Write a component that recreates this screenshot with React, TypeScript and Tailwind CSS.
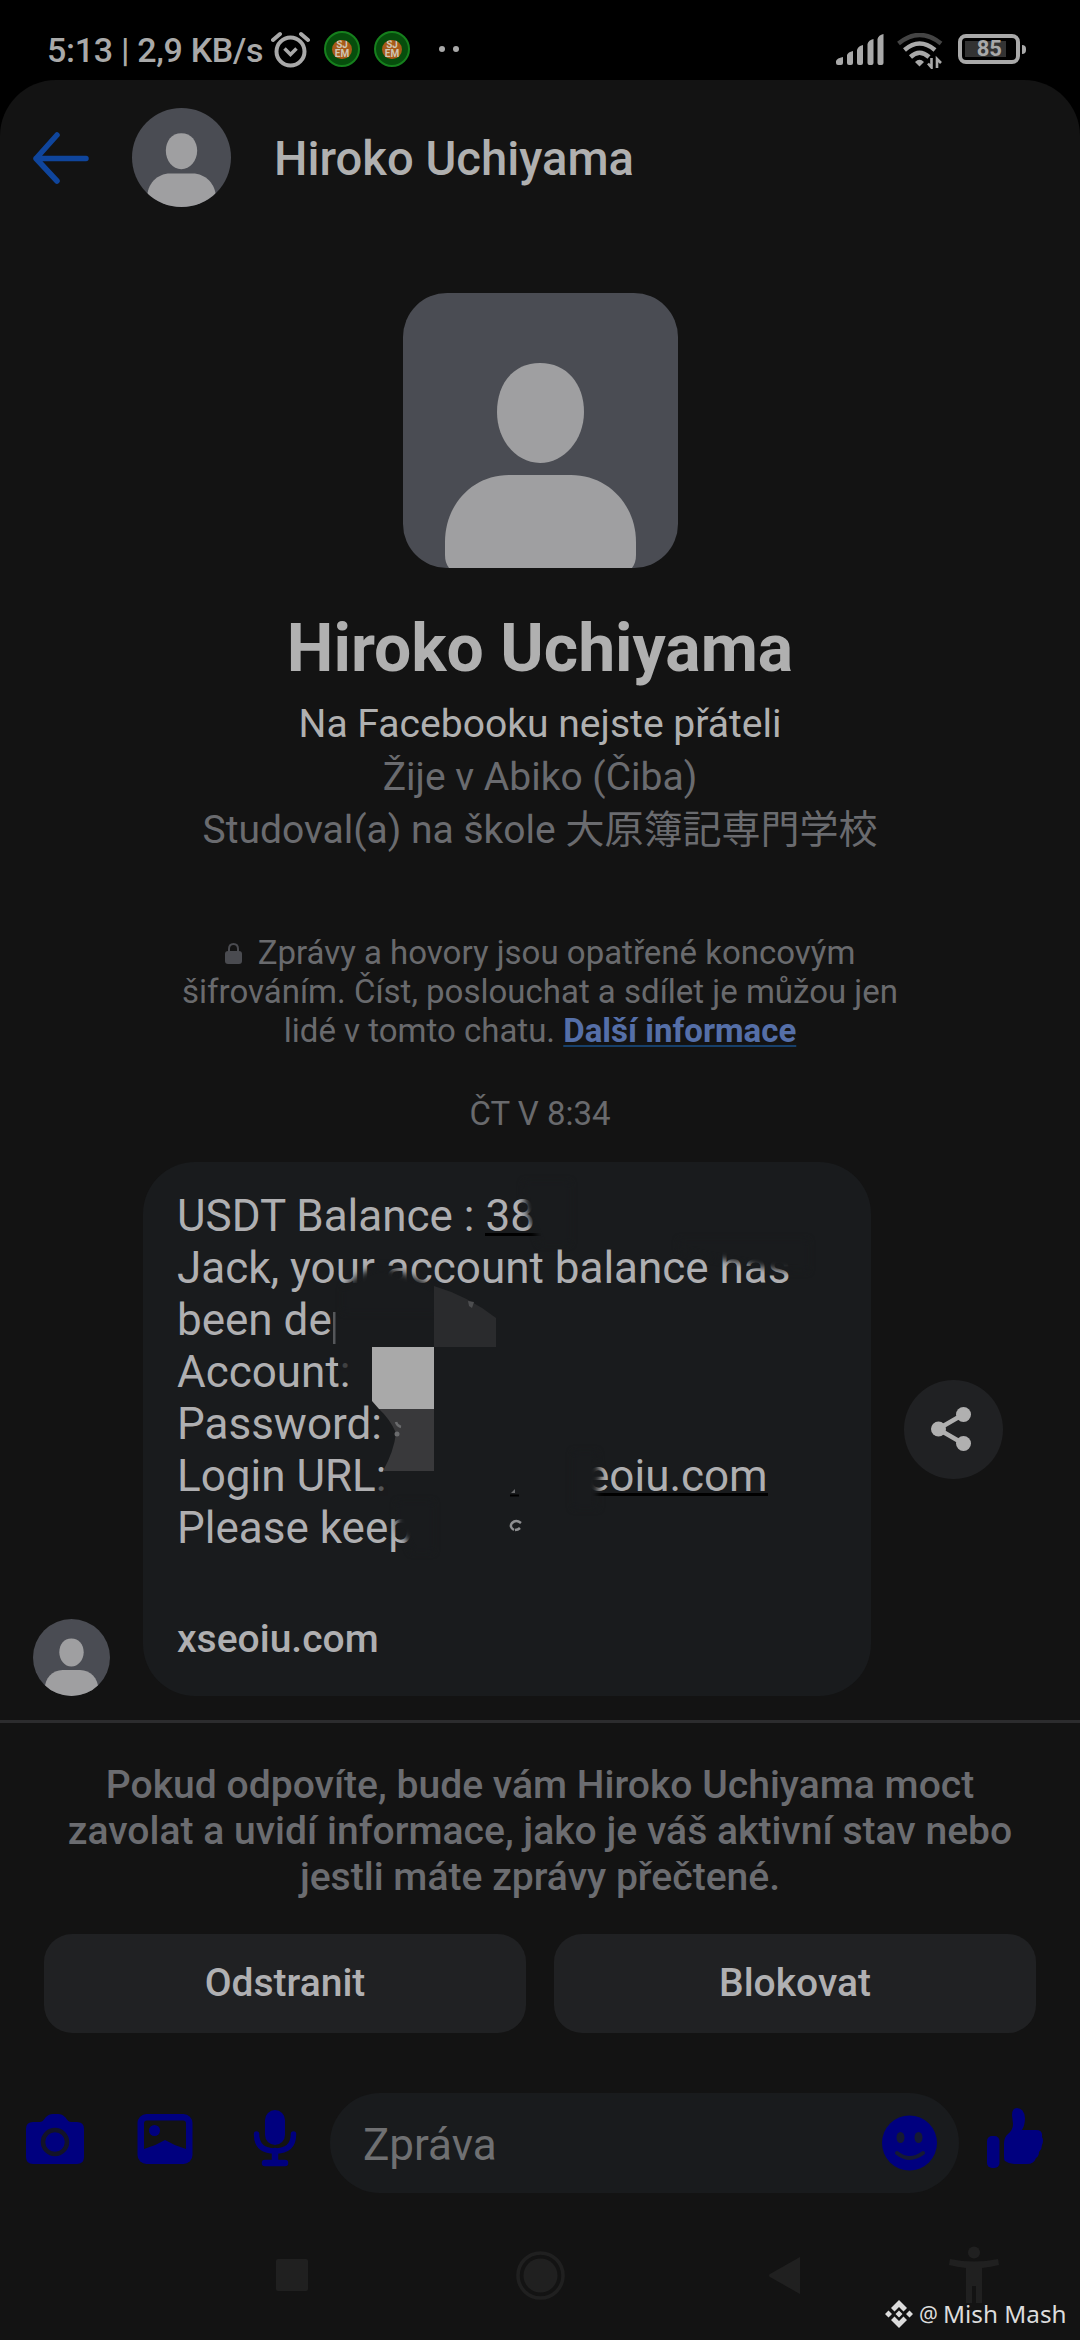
import type { ReactNode } from "react";

const Avatar = ({ className }: { className: string }) => (
  <svg viewBox="0 0 275 275" className={className}>
    <rect width="275" height="275" fill="#4a4c53" />
    <path
      d="M137 70C164 70 181 91 181 119C181 147 161 170 137 170C113 170 94 147 94 119C94 91 110 70 137 70Z"
      fill="#9f9fa1"
    />
    <path
      d="M106 182H168C205 182 233 212 233 249V262Q233 270 229 275H46Q42 270 42 262V249C42 212 69 182 106 182Z"
      fill="#9f9fa1"
    />
  </svg>
);

const AppBadge = () => (
  <div className="w-9 h-9 rounded-full bg-[#064d0c] border-2 border-[#16801d] flex items-center justify-center">
    <div className="w-5 h-[19px] rounded-full bg-[#a85a18] flex flex-col items-center justify-center overflow-hidden text-[10px] leading-[9px] font-bold text-[#cfc6b4]">
      <span>SJ</span>
      <span>EM</span>
    </div>
  </div>
);

const StatusBar = () => (
  <header className="h-20 shrink-0 flex items-start text-[#a9a9a9]">
    <span className="ml-[47px] mt-[30px] w-[217px] text-[34px] leading-[40px] font-medium tracking-[-0.3px] whitespace-nowrap">
      5:13 | 2,9 KB/s
    </span>
    <svg viewBox="0 0 40 37" className="ml-[7px] mt-[31px] w-10 h-[37px]" fill="none" stroke="#a9a9a9">
      <circle cx="19.500" cy="20.500" r="14" strokeWidth="4" />
      <path d="M13.500 17.500l6 6 6-6" strokeWidth="3.500" />
      <path d="M2 9L9 3M30 3l7 6" strokeWidth="4" strokeLinecap="round" />
    </svg>
    <div className="ml-[13px] mt-[31px] flex gap-3.5">
      <AppBadge />
      <AppBadge />
    </div>
    <div className="ml-[29px] mt-[46px] flex gap-2">
      <span className="w-1.5 h-1.5 rounded-full bg-[#a9a9a9]" />
      <span className="w-1.5 h-1.5 rounded-full bg-[#a9a9a9]" />
    </div>
    <svg viewBox="0 0 49 32" className="ml-auto mt-[34px] w-[49px] h-8" fill="#a9a9a9">
      <path d="M0 27q1-3 7-4v6q0 2-2 2H2q-2 0-2-2zM11 21q1-3 6-4v12q0 2-2 2h-2q-2 0-2-2zM21 16q1-4 6-5v18q0 2-2 2h-2q-2 0-2-2zM31.500 10q1-4 6-5v24q0 2-2 2h-2q-2 0-2-2zM41.500 5q1-4 6-5v29q0 2-2 2h-2q-2 0-2-2z" />
    </svg>
    <svg viewBox="0 0 46 36" className="ml-3 mt-[33px] w-[46px] h-9" fill="none" strokeWidth="4.500">
      <path d="M1.500 10.500Q22.500-6.500 44 10.500" stroke="#444" />
      <path d="M7.500 17Q22.500 4 38 17" stroke="#a9a9a9" />
      <path d="M13.500 24Q22.500 15.500 32 24" stroke="#a9a9a9" />
      <path d="M18 29q4.500-4.500 9 0l-4.500 4.500z" fill="#a9a9a9" />
      <path d="M34.500 25v9.500l-3.500-4M40 35v-9l4 4" stroke="#a9a9a9" strokeWidth="2.600" />
    </svg>
    <div className="ml-[15px] mr-[54px] mt-[34px] flex items-center">
      <div className="w-[62px] h-[30px] rounded-[8px] border-4 border-[#a9a9a9] p-[3px]">
        <div className="w-[41px] h-4 bg-[#333] flex items-center justify-end pr-1 text-[22px] leading-none font-bold">
          85
        </div>
      </div>
      <span className="ml-0.5 w-1 h-[9px] rounded-r bg-[#a9a9a9]" />
    </div>
  </header>
);

const Line = ({ children }: { children: ReactNode }) => (
  <p className="flex whitespace-pre h-[52px]">{children}</p>
);

// brush strokes and pixel blocks that hide the private parts of the message
const Redaction = () => (
  <svg viewBox="0 0 728 534" className="absolute inset-0 w-[728px] h-[534px]">
    <defs>
      <filter id="soft" x="-50%" y="-50%" width="200%" height="200%" colorInterpolationFilters="sRGB">
        <feGaussianBlur stdDeviation="3" />
      </filter>
    </defs>
    <g fill="#191b1d" filter="url(#soft)">
      <path d="M381 20h46v62h-30q-4-12-10-22-8-20-6-40z" />
      <path d="M200 126Q222 105 240 104 268 112 295 127V150H200Z" />
      <path d="M536 78H665V109Q632 110 602 101 570 97 536 88Z" />
      <path d="M254 340h36v50h-22q-2-14-14-20z" />
      <path d="M430 290h24q0 18 5 24-6 8-4 32h-25z" />
    </g>
    <g fill="#191b1d">
      <rect x="195" y="198" width="12" height="12" opacity=".75" />
      <rect x="233" y="322" width="12" height="12" opacity=".6" />
      <rect x="245" y="348" width="9" height="9" opacity=".8" />
    </g>
    <rect x="190" y="150" width="2.500" height="32" fill="#55575a" />
    <path d="M291 124Q325 134 353 156V185H291Z" fill="#2a2b2d" />
    <path d="M325 139l6 1-2 6-3-2z" fill="#4d4e50" />
    <path d="M229 185h62v62h-55l-7-8z" fill="#a9a9a9" />
    <path d="M236 247h55v62h-51q11-20 13-38-6-14-17-24z" fill="#39393b" />
    <path d="M253 260q1 4 5 5" stroke="#6a6b6d" strokeWidth="2.500" fill="none" />
    <circle cx="254" cy="272" r="2.500" fill="#6a6b6d" />
    <path d="M371 368q-5-3-2-7 4-4 9 0M372 368q3 0 5-2" stroke="#8e8f91" strokeWidth="2.500" fill="none" />
    <path d="M368 331l4-4v4z" fill="#6a6b6d" />
    <path d="M367 333.500h9" stroke="#000" strokeWidth="2" />
  </svg>
);

const Message = () => (
  <div className="relative w-[728px] h-[534px] rounded-[52px] bg-[#191b1d] pl-[34px] pt-7 text-[#afafb1]">
    <div className="text-[44px] leading-[52px]">
      <Line>
        USDT Balance :{" "}
        <span className="h-[46px] border-b-[3px] border-black pr-1.5">38</span>
      </Line>
      <Line>Jack, your account balance has</Line>
      <Line>been de</Line>
      <Line>Account:</Line>
      <Line>Password:</Line>
      <Line>
        <span className="w-[409px]">Login URL:</span>
        <span className="h-[46px] border-b-[3px] border-black">eoiu.com</span>
      </Line>
      <Line>Please keep</Line>
    </div>
    <p className="mt-[62px] text-[39px] leading-[46px] font-medium">xseoiu.com</p>
    <Redaction />
  </div>
);

const ActionButton = ({ label }: { label: string }) => (
  <button className="flex-1 h-[99px] rounded-[28px] bg-[#202123] text-[39px] font-medium text-[#b0b0b2] pb-px">
    {label}
  </button>
);

const Composer = () => (
  <div className="mt-[60px] h-[100px] flex items-center">
    <svg viewBox="0 0 60 50" className="ml-[25px] mb-2 w-[60px] h-[50px]">
      <path
        d="M8 8H15C18 8 19 5 21 3C23 1 25 0 28 0H33C36 0 38 1 40 3C42 5 43 8 46 8H52Q59 8 59 15V43Q59 50 52 50H8Q1 50 1 43V15Q1 8 8 8Z"
        fill="#00007f"
      />
      <circle cx="30" cy="28" r="12" fill="none" stroke="#131328" strokeWidth="4.500" />
    </svg>
    <svg viewBox="0 0 56 50" className="ml-[52px] mb-2 w-14 h-[50px]">
      <rect x="0.500" width="55" height="50" rx="9" fill="#00007f" />
      <path d="M10 6.500h36q3 0 3 3V35Q38 32 28 26Q18 32 7 35V9.500q0-3 3-3z" fill="#131313" />
      <circle cx="17.500" cy="16.500" r="5.500" fill="#00007f" />
    </svg>
    <svg viewBox="0 0 44 58" className="ml-[60px] mb-2.5 w-11 h-[58px]" fill="none" stroke="#00007f">
      <rect x="12" y="1" width="20" height="35" rx="10" fill="#00007f" stroke="none" />
      <path d="M3.500 25q0 17 18.500 17t18.500-17" strokeWidth="5.500" strokeLinecap="round" />
      <path d="M22 42v11M12 54h20" strokeWidth="6.500" strokeLinecap="round" />
    </svg>
    <div className="ml-[33px] w-[629px] h-[100px] rounded-full bg-[#191b1d] flex items-center justify-between pl-[33px] pr-[22px]">
      <span className="text-[44px] leading-[52px] pt-[3px] text-[#6f7072]">Zpráva</span>
      <svg viewBox="0 0 55 56" className="w-[55px] h-14">
        <circle cx="27.500" cy="28" r="27.500" fill="#00007f" />
        <ellipse cx="18.500" cy="22.500" rx="4" ry="5.500" fill="#161a33" />
        <ellipse cx="36.500" cy="22.500" rx="4" ry="5.500" fill="#161a33" />
        <path d="M15 38q12.500 10 26 0" stroke="#161a33" strokeWidth="4" strokeLinecap="round" fill="none" />
      </svg>
    </div>
    <svg viewBox="0 0 57 60" className="ml-7 mb-2.5 w-[57px] h-[60px]" fill="#00007f">
      <rect y="28" width="12.500" height="32" rx="5" />
      <path d="M25 7q0-7 5-7 7 0 8 10 0 7-3 12h14q7 0 6 7 2 3 0 8 0 4-3 7 0 4-3 6-2 6-9 6H27q-5 0-9-3-1-1-1-4V36q0-7 4-10 5-4 5-10z" />
    </svg>
  </div>
);

const NavBar = () => (
  <nav className="relative flex-1">
    <svg viewBox="0 0 1080 147" className="w-[1080px] h-[147px]" fill="#202020">
      <rect x="276" y="66" width="32" height="32" rx="2" />
      <circle cx="540.500" cy="82.500" r="22.500" fill="none" stroke="#202020" strokeWidth="3.500" />
      <circle cx="540.500" cy="82.500" r="17" />
      <path d="M800 64v37l-30-17q-2-1.500 0-3z" />
      <circle cx="974" cy="59.500" r="6" />
      <path d="M950 66q24 5 48 0l1 6q-8 2-17 3v35h-6V93h-4v17h-6V75q-9-1-17-3z" />
    </svg>
    <div className="absolute right-[15px] bottom-[9px] h-[34px] flex items-center text-[#dcdcdc] font-['Noto_Sans',sans-serif] leading-[34px] whitespace-nowrap">
      <svg viewBox="0 0 28 28" className="w-7 h-7 mr-1.5" fill="currentColor">
        <path d="M14 0l8 8-3.500 3.500L14 7l-4.500 4.500L6 8zM14 28l8-8-3.500-3.500L14 21l-4.500-4.500L6 20zM3.500 10.500L7 14l-3.500 3.500L0 14zM24.500 10.500L28 14l-3.500 3.500L21 14zM14 10.500l3.500 3.500-3.500 3.500-3.500-3.500z" />
      </svg>
      <span className="w-6 text-[21px]">@</span>
      <span className="w-[122px] text-[24.300px]">Mish Mash</span>
    </div>
  </nav>
);

const App = () => {
  return (
    <div className="w-[1080px] h-[2340px] overflow-hidden bg-black flex flex-col font-[Roboto,'Noto_Sans_CJK_JP',sans-serif]">
      <StatusBar />
      <main className="flex-1 flex flex-col rounded-t-[56px] bg-[#131313]">
        <div className="h-[155px] flex items-center">
          <svg viewBox="0 0 58 52" className="ml-8 w-[58px] h-[52px]" fill="none" stroke="#0f459c" strokeWidth="5.500" strokeLinecap="round" strokeLinejoin="round">
            <path d="M25 3L4 26.500 25 49M4 26.500h50" />
          </svg>
          <Avatar className="ml-[42px] w-[99px] h-[99px] rounded-full" />
          <h1 className="ml-[43px] mt-[3px] text-[47.200px] font-medium text-[#b0b0b0]">Hiroko Uchiyama</h1>
        </div>

        <section className="flex flex-col items-center text-center">
          <Avatar className="mt-[58px] w-[275px] h-[275px] rounded-[44px]" />
          <h2 className="mt-[42px] text-[66px] leading-[78px] font-bold text-[#b0b0b0]">Hiroko Uchiyama</h2>
          <p className="mt-2.5 text-[39.100px] leading-[53px] text-[#b0b0b0]">Na Facebooku nejste přáteli</p>
          <p className="text-[39px] leading-[53px] text-[#6a6b6f]">Žije v Abiko (Čiba)</p>
          <p className="h-[53px] text-[39px] leading-[53px] text-[#6a6b6f]">Studoval(a) na škole 大原簿記専門学校</p>
          <p className="mt-[76px] text-[33px] leading-[39px] text-[#696a6d]">
            <svg viewBox="0 0 17 21" className="inline-block w-[17px] h-[21px] mr-4 align-[0px]">
              <rect y="8" width="17" height="13" rx="3" fill="#4a4b50" />
              <path d="M4 9V6q0-5 4.500-5T13 6v3" fill="none" stroke="#4a4b50" strokeWidth="2" />
            </svg>
            Zprávy a hovory jsou opatřené koncovým
            <br />
            šifrováním. Číst, poslouchat a sdílet je můžou jen
            <br />
            lidé v tomto chatu.{" "}
            <a className="font-bold text-[#556fa8] underline decoration-[#17406b] decoration-2 underline-offset-[3px]">
              Další informace
            </a>
          </p>
          <p className="mt-11 text-[33px] leading-[39px] text-[#696a6d]">ČT V 8:34</p>
        </section>

        <div className="mt-[29px] flex items-end pl-[33px]">
          <Avatar className="w-[77px] h-[77px] rounded-full mr-[33px]" />
          <Message />
          <button className="self-center ml-[33px] w-[99px] h-[99px] rounded-full bg-[#202123] flex items-center justify-center">
            <svg viewBox="0 0 40 44" className="w-10 h-11 mr-1.5" fill="#b0b0b0">
              <path d="M33 7L7 22l26 15" fill="none" stroke="#b0b0b0" strokeWidth="4.500" />
              <circle cx="32.500" cy="7.500" r="7.500" />
              <circle cx="7.500" cy="22" r="7.500" />
              <circle cx="32.500" cy="36.500" r="7.500" />
            </svg>
          </button>
        </div>

        <div className="mt-6 h-[3px] bg-[#2c2c2e]" />
        <p className="mt-[39px] text-center text-[39.100px] leading-[46px] font-medium text-[#6b6c70]">
          Pokud odpovíte, bude vám Hiroko Uchiyama moct
          <br />
          zavolat a uvidí informace, jako je váš aktivní stav nebo
          <br />
          jestli máte zprávy přečtené.
        </p>
        <div className="mt-[34px] px-11 flex gap-7">
          <ActionButton label="Odstranit" />
          <ActionButton label="Blokovat" />
        </div>
        <Composer />
        <NavBar />
      </main>
    </div>
  );
};

export default App;
